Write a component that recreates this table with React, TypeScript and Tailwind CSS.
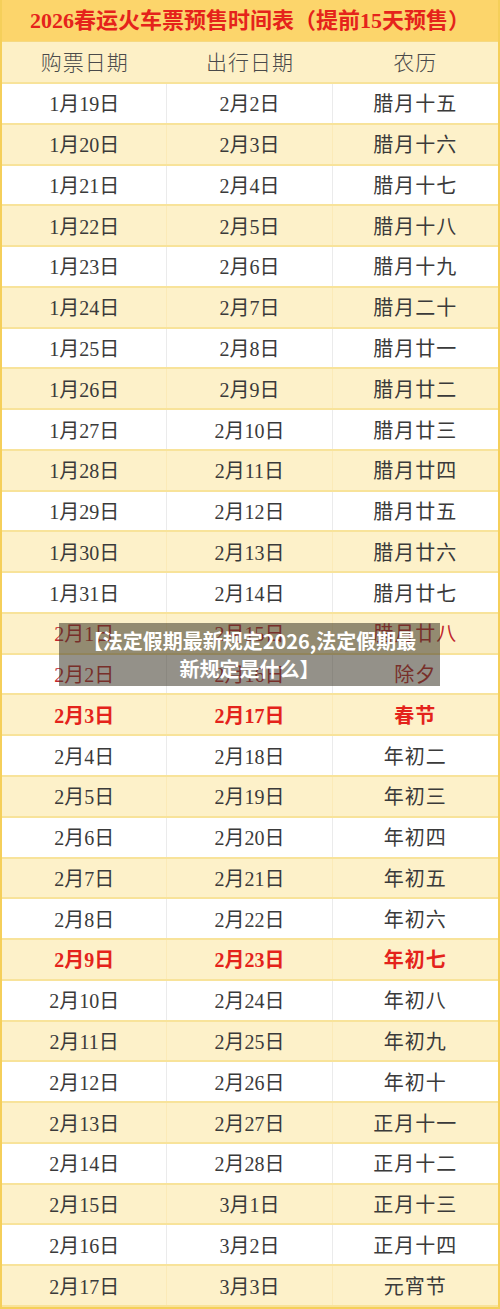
import React from "react";

type Row = { buy: string; go: string; lunar: string; tone?: "red" | "bold" };

const rows: Row[] = [
  { buy: "1月19日", go: "2月2日", lunar: "腊月十五" },
  { buy: "1月20日", go: "2月3日", lunar: "腊月十六" },
  { buy: "1月21日", go: "2月4日", lunar: "腊月十七" },
  { buy: "1月22日", go: "2月5日", lunar: "腊月十八" },
  { buy: "1月23日", go: "2月6日", lunar: "腊月十九" },
  { buy: "1月24日", go: "2月7日", lunar: "腊月二十" },
  { buy: "1月25日", go: "2月8日", lunar: "腊月廿一" },
  { buy: "1月26日", go: "2月9日", lunar: "腊月廿二" },
  { buy: "1月27日", go: "2月10日", lunar: "腊月廿三" },
  { buy: "1月28日", go: "2月11日", lunar: "腊月廿四" },
  { buy: "1月29日", go: "2月12日", lunar: "腊月廿五" },
  { buy: "1月30日", go: "2月13日", lunar: "腊月廿六" },
  { buy: "1月31日", go: "2月14日", lunar: "腊月廿七" },
  { buy: "2月1日", go: "2月15日", lunar: "腊月廿八", tone: "red" },
  { buy: "2月2日", go: "2月16日", lunar: "除夕", tone: "red" },
  { buy: "2月3日", go: "2月17日", lunar: "春节", tone: "bold" },
  { buy: "2月4日", go: "2月18日", lunar: "年初二" },
  { buy: "2月5日", go: "2月19日", lunar: "年初三" },
  { buy: "2月6日", go: "2月20日", lunar: "年初四" },
  { buy: "2月7日", go: "2月21日", lunar: "年初五" },
  { buy: "2月8日", go: "2月22日", lunar: "年初六" },
  { buy: "2月9日", go: "2月23日", lunar: "年初七", tone: "bold" },
  { buy: "2月10日", go: "2月24日", lunar: "年初八" },
  { buy: "2月11日", go: "2月25日", lunar: "年初九" },
  { buy: "2月12日", go: "2月26日", lunar: "年初十" },
  { buy: "2月13日", go: "2月27日", lunar: "正月十一" },
  { buy: "2月14日", go: "2月28日", lunar: "正月十二" },
  { buy: "2月15日", go: "3月1日", lunar: "正月十三" },
  { buy: "2月16日", go: "3月2日", lunar: "正月十四" },
  { buy: "2月17日", go: "3月3日", lunar: "元宵节" },
];

const serif = "font-['Liberation_Serif','Noto_Sans_CJK_SC',serif]";

export default function App() {
  return (
    <div className="relative w-[500px] h-[1309px] bg-white">
      <div className="flex flex-col h-full border-x-2 border-b-2 border-[#f5cf5a]">
        {/* title */}
        <div className="h-[42px] shrink-0 flex items-center justify-center bg-[#fcd56b] border-b border-[#f6d981]">
          <span className={`${serif} text-[22px] font-bold text-[#e5231b]`}>
            2026春运火车票预售时间表（提前15天预售）
          </span>
        </div>

        {/* column headers */}
        <div className="h-[42px] shrink-0 grid grid-cols-3 bg-[#fdf0c6] border-b-2 border-[#f8e39a] text-[21px] text-[#4a4a4a] font-['Noto_Sans_CJK_SC',sans-serif] font-light tracking-[1px]">
          <div className="flex items-center justify-center">购票日期</div>
          <div className="flex items-center justify-center">出行日期</div>
          <div className="flex items-center justify-center">农历</div>
        </div>

        {rows.map((r, i) => {
          const cream = i % 2 === 1;
          const color =
            r.tone === "red"
              ? "text-[#c0272d]"
              : r.tone === "bold"
              ? "text-[#e4231b] font-bold"
              : "text-[#3a3a3a]";
          const divider = cream ? "border-[#fbeab8]" : "border-[#ebebeb]";
          return (
            <div
              key={i}
              className={`flex-1 grid grid-cols-3 border-b-2 border-[#f8e39a] ${
                cream ? "bg-[#fdf1c9]" : "bg-white"
              } ${serif} text-[20px] ${color}`}
            >
              <div className={`flex items-center justify-center pt-[2px] border-r ${divider}`}>{r.buy}</div>
              <div className={`flex items-center justify-center pt-[2px] border-r ${divider}`}>{r.go}</div>
              <div className="flex items-center justify-center pt-[2px] tracking-[1px]">{r.lunar}</div>
            </div>
          );
        })}
      </div>

      {/* caption overlay */}
      <div className="absolute left-[59px] top-[623px] w-[381px] h-[63px] bg-[rgba(60,55,40,0.55)] flex items-center justify-center px-[18px]">
        <p className="text-center text-white font-bold text-[20px] leading-[28px] font-['Noto_Sans_CJK_SC',sans-serif]">
          【法定假期最新规定2026,法定假期最新规定是什么】
        </p>
      </div>
    </div>
  );
}
